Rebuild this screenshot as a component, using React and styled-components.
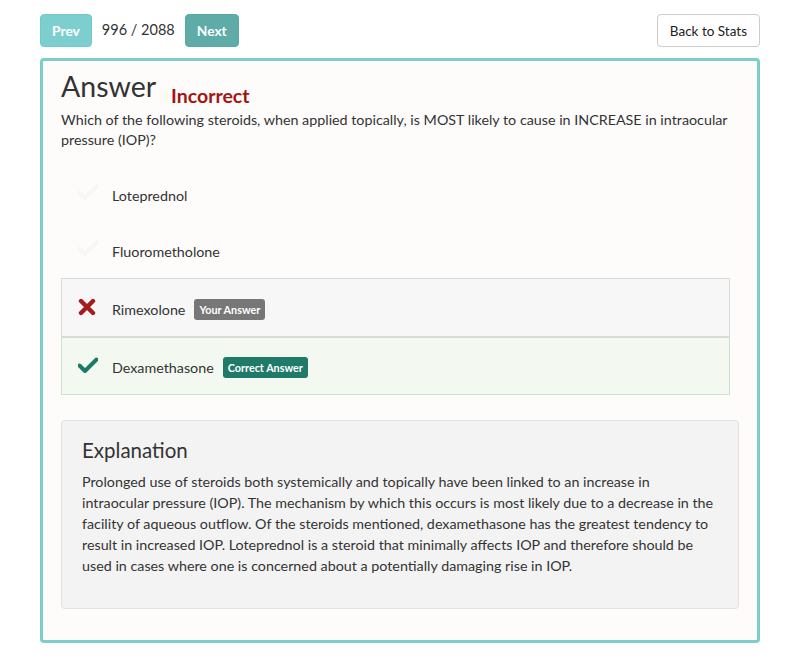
import styled, { createGlobalStyle } from 'styled-components';

const GlobalStyle = createGlobalStyle`
  body {
    margin: 0;
    background: #fff;
    font-family: Lato, "Open Sans", sans-serif;
    color: #333;
  }
`;

const options = [
  { text: 'Loteprednol' },
  { text: 'Fluorometholone' },
  { text: 'Rimexolone', state: 'wrong', badge: 'Your Answer' },
  { text: 'Dexamethasone', state: 'right', badge: 'Correct Answer' },
];

const CheckIcon = ({ color }) => (
  <svg width='20' height='16' viewBox='0 0 20 16'>
    <path d='M1.5 8.5 L7 14 L18.5 2.5' fill='none' stroke={color} strokeWidth='4' strokeLinecap='round' strokeLinejoin='round' />
  </svg>
);

const CrossIcon = () => (
  <svg width='18' height='18' viewBox='0 0 18 18'>
    <path d='M3 3 L15 15 M15 3 L3 15' fill='none' stroke='#a31d1d' strokeWidth='4.4' strokeLinecap='round' />
  </svg>
);

const App = () => {
  return (
    <Page>
      <GlobalStyle />
      <Toolbar>
        <Pager>
          <NavButton>Prev</NavButton>
          <Counter>996 / 2088</Counter>
          <NavButton dark>Next</NavButton>
        </Pager>
        <StatsButton>Back to Stats</StatsButton>
      </Toolbar>

      <Card>
        <TitleRow>
          <h1>Answer</h1>
          <Verdict>Incorrect</Verdict>
        </TitleRow>
        <Question>
          Which of the following steroids, when applied topically, is MOST likely to cause in INCREASE in intraocular
          pressure (IOP)?
        </Question>

        <OptionList>
          {options.map((o) => (
            <Option key={o.text} state={o.state}>
              <IconSlot>
                {o.state === 'wrong' ? <CrossIcon /> : <CheckIcon color={o.state === 'right' ? '#1d7a6b' : '#f6f6f6'} />}
              </IconSlot>
              <span>{o.text}</span>
              {o.badge && <Badge state={o.state}>{o.badge}</Badge>}
            </Option>
          ))}
        </OptionList>

        <Explanation>
          <h3>Explanation</h3>
          <p>
            Prolonged use of steroids both systemically and topically have been linked to an increase in
            intraocular pressure (IOP). The mechanism by which this occurs is most likely due to a decrease in the
            facility of aqueous outflow. Of the steroids mentioned, dexamethasone has the greatest tendency to
            result in increased IOP. Loteprednol is a steroid that minimally affects IOP and therefore should be
            used in cases where one is concerned about a potentially damaging rise in IOP.
          </p>
        </Explanation>
      </Card>
    </Page>
  );
};

const Page = styled.div`
  padding: 14px 40px 24px;
`;

const Toolbar = styled.div`
  display: flex;
  justify-content: space-between;
  align-items: center;
  margin-bottom: 11px;
`;

const Pager = styled.div`
  display: flex;
  align-items: center;
  gap: 10px;
`;

const NavButton = styled.button`
  height: 33px;
  padding: 0 11px;
  border: 1px solid ${(p) => (p.dark ? '#5aa8a5' : '#72c9c9')};
  border-radius: 4px;
  background: ${(p) => (p.dark ? '#5eaba8' : '#7dcfcf')};
  color: #fff;
  font-family: Lato, sans-serif;
  font-weight: 700;
  font-size: 13.8px;
  cursor: pointer;
`;

const Counter = styled.span`
  font-size: 14.5px;
  color: #333;
  margin-top: -2px;
`;

const StatsButton = styled.button`
  height: 33px;
  padding: 0 12px;
  border: 1px solid #ccc;
  border-radius: 4px;
  background: #fff;
  color: #222;
  font-family: Lato, sans-serif;
  font-size: 13.5px;
`;

const Card = styled.div`
  border: 3px solid #7ecdcb;
  border-radius: 4px;
  background: #fdfcfb;
  padding: 8px 18px 31px;
`;

const TitleRow = styled.div`
  display: flex;
  align-items: flex-end;
  gap: 15px;

  h1 {
    margin: 0;
    font-size: 28.5px;
    font-weight: 400;
    color: #333;
    line-height: 34px;
  }
`;

const Verdict = styled.span`
  color: #a31515;
  font-size: 19.5px;
  font-weight: 700;
  margin-bottom: -4px;
`;

const Question = styled.p`
  margin: 7px 0 0;
  font-size: 14.3px;
  line-height: 20px;
  color: #333;
`;

const OptionList = styled.div`
  margin: 17px 9px 0 0;
`;

const Option = styled.div`
  display: flex;
  align-items: center;
  box-sizing: border-box;
  height: ${(p) => (p.state === 'wrong' ? '59px' : p.state === 'right' ? '58px' : '56px')};
  margin-top: ${(p) => (p.state === 'wrong' ? '-1px' : '0')};
  padding: ${(p) => (p.state ? '4px 16px 0' : '0 16px')};
  font-size: 14.3px;
  color: #333;
  background: ${(p) => (p.state === 'wrong' ? '#f7f7f8' : p.state === 'right' ? '#f3f9f1' : 'transparent')};
  border: 1px solid ${(p) => (p.state === 'wrong' ? '#d9dadc' : p.state === 'right' ? '#cce1cb' : 'transparent')};
  border-top-width: ${(p) => (p.state === 'right' ? '0' : '1px')};
  box-shadow: ${(p) => (p.state === 'right' ? 'inset 0 1px 0 #d3dfd3' : 'none')};
`;

const IconSlot = styled.span`
  display: inline-flex;
  width: 34px;
  justify-content: flex-start;
  align-items: center;
  margin-top: -6px;
`;

const Badge = styled.span`
  margin-left: 9px;
  padding: 4px 5px;
  border-radius: 3px;
  font-size: 10.8px;
  font-weight: 700;
  color: #fff;
  background: ${(p) => (p.state === 'right' ? '#1f7a6a' : '#777')};
`;

const Explanation = styled.div`
  margin-top: 25px;
  background: #f3f3f3;
  border: 1px solid #e0e0e0;
  border-radius: 4px;
  padding: 17px 20px 32px;

  h3 {
    margin: 0 0 9px;
    font-size: 20.5px;
    font-weight: 400;
    color: #333;
  }

  p {
    margin: 0;
    font-size: 14.3px;
    line-height: 21px;
    color: #333;
  }
`;

export default App;
